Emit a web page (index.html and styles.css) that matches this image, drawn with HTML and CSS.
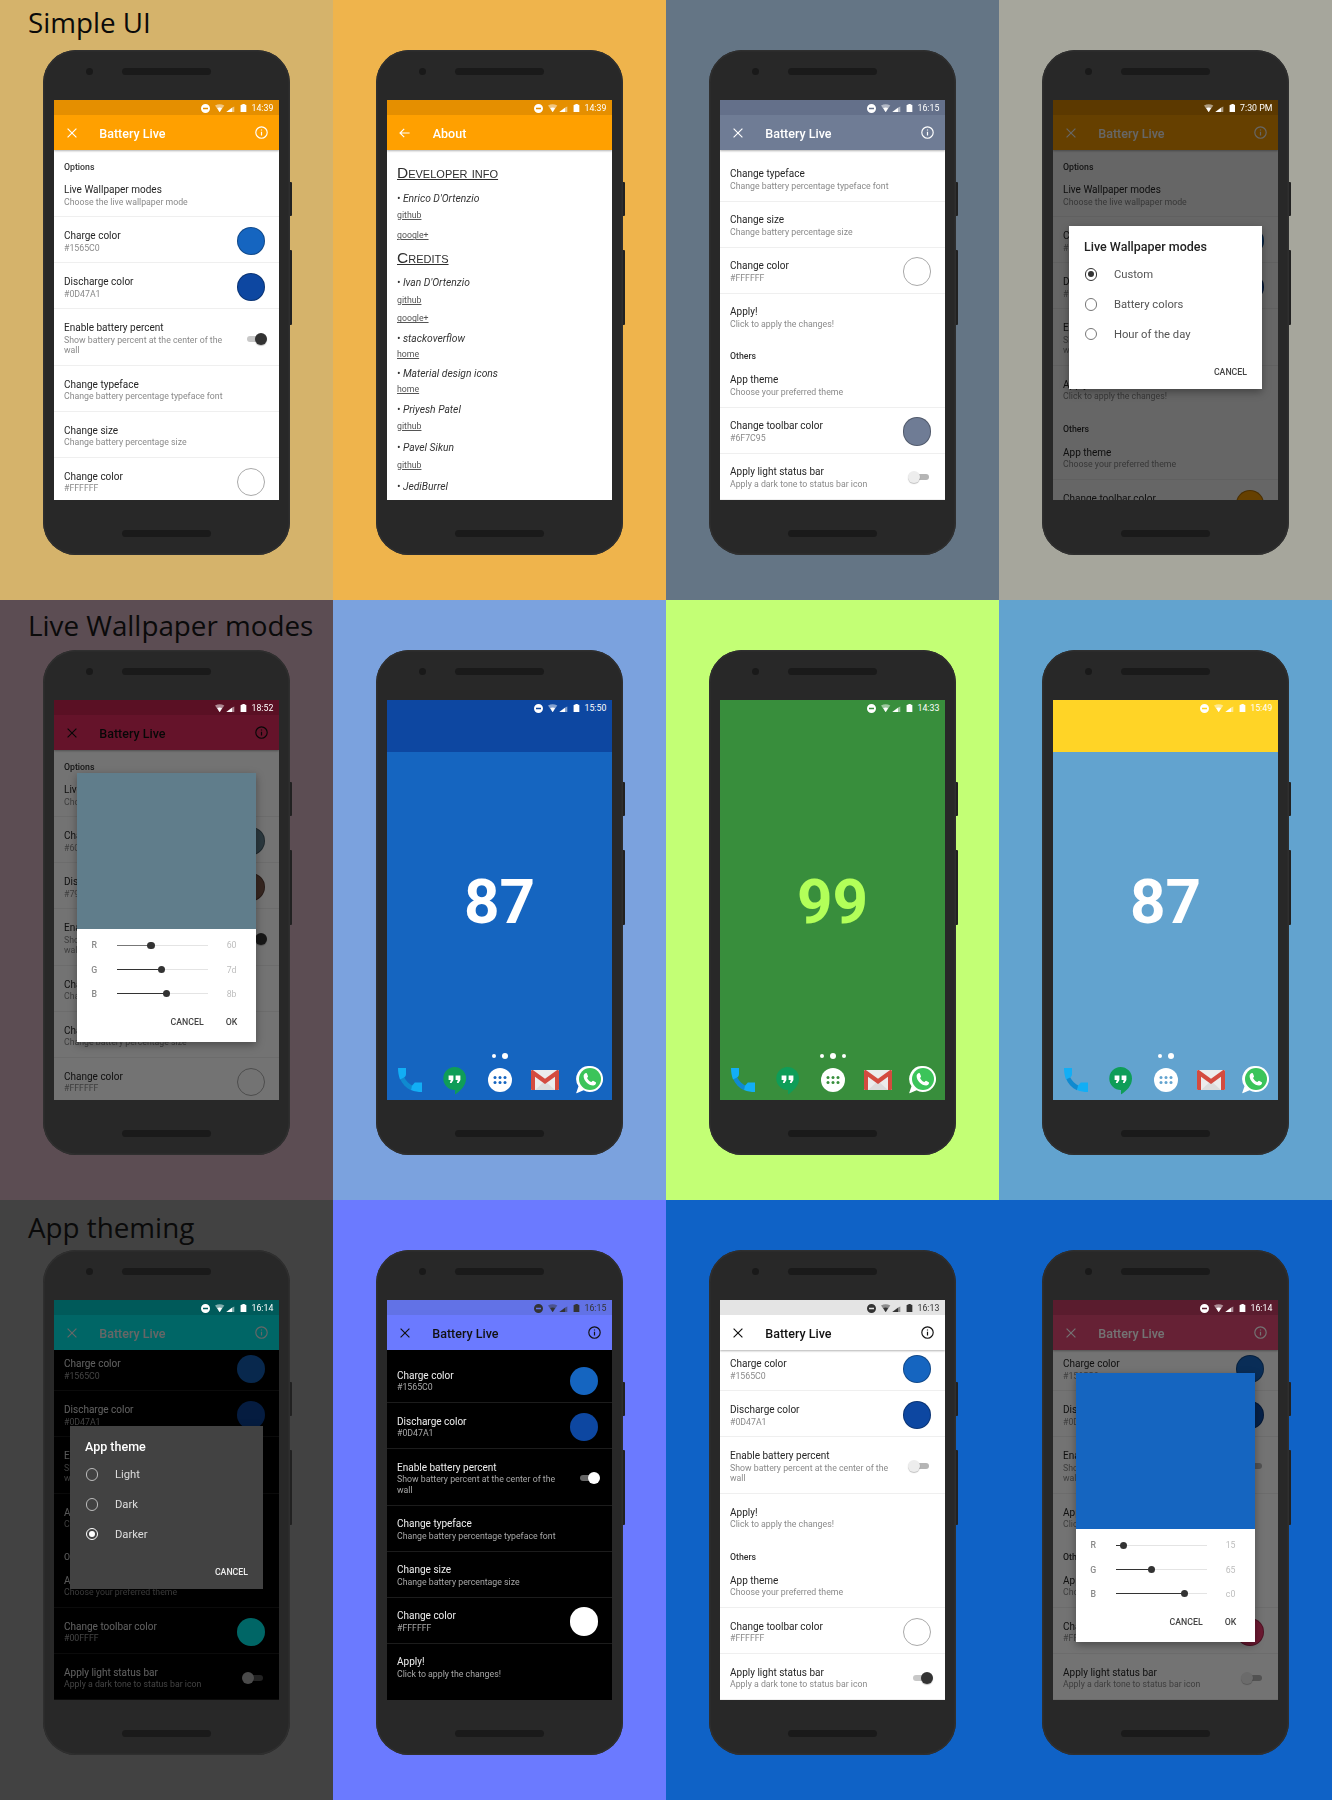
FILE: index.html
```html
<!DOCTYPE html>
<html lang="en">
<head>
<meta charset="utf-8">
<title>Battery Live</title>
<link rel="stylesheet" href="styles.css">
</head>
<body>
<svg class="sprite" aria-hidden="true">
  <symbol id="i-close" viewBox="0 0 10 10"><path d="M.6.6l8.800 8.800M9.400.6L.6 9.400" fill="none" stroke="currentColor" stroke-width="1.150"/></symbol>
  <symbol id="i-back" viewBox="0 0 11 10"><path d="M10.600 5H1M5.200.8L1 5l4.200 4.200" fill="none" stroke="currentColor" stroke-width="1.150"/></symbol>
  <symbol id="i-info" viewBox="0 0 13 13"><circle cx="6.500" cy="6.500" r="5.700" fill="none" stroke="currentColor" stroke-width="1.150"/><path d="M5.900 5.800h1.200v3.800H5.900zM5.900 3.400h1.200v1.200H5.900z" fill="currentColor"/></symbol>
  <symbol id="i-dnd" viewBox="0 0 9 9"><path fill-rule="evenodd" d="M4.500 0a4.500 4.500 0 1 0 0 9a4.500 4.500 0 1 0 0-9zM2 3.800h5v1.400H2z" fill="currentColor"/></symbol>
  <symbol id="i-sys" viewBox="0 0 31.600 8.400">
    <path d="M0 1.400C3-.1 6.300-.1 9.300 1.400L4.650 8.200z" fill="currentColor" opacity=".5"/>
    <path d="M2.200 4C3.700 3.300 5.600 3.300 7.100 4L4.650 8.200z" fill="currentColor"/>
    <path d="M11 8.200L17.200 3.600V8.200z" fill="currentColor"/>
    <path d="M17.200 3.600L19.300 2.400V8.200H17.200z" fill="currentColor" opacity=".5"/>
    <path d="M27.400 0h2.400v.8H31a.6.6 0 0 1 .6.6v6.500a.5.5 0 0 1-.5.5h-5a.5.5 0 0 1-.5-.5V1.400a.6.6 0 0 1 .6-.6h1.200z" fill="currentColor"/>
  </symbol>
  <symbol id="i-phone" viewBox="0 0 24 24">
    <path d="M2 10.500l4-1.500C8 13 11 16 15 18l-2 4.200C8 20 4 16 2 10.500z" fill="#0f8ad0"/>
    <path d="M0 0h8v6c0 1.800-.9 3-2 3.500L2 11.500C.7 8 0 4 0 0z" fill="#12aef5"/>
    <path d="M14 17.800l2.800-3.300H24V24c-4 0-7.500-.6-11-2z" fill="#12aef5"/>
  </symbol>
  <symbol id="i-hangouts" viewBox="0 0 23 27.500">
    <path d="M11.500 0a11.500 11.500 0 0 1 11.500 11.500c0 7-5 12-11 16V23A11.500 11.500 0 0 1 11.500 0z" fill="#0f9d58"/>
    <path d="M5.600 8.500h4.800v4.400L8.600 16H6.800l1-3h-2.200zM12.600 8.500h4.800v4.400L15.600 16h-1.800l1-3h-2.200z" fill="#fff"/>
  </symbol>
  <symbol id="i-apps" viewBox="0 0 24 24">
    <circle cx="12" cy="12" r="12" fill="#fff"/>
    <g fill="currentColor"><circle cx="7" cy="9.500" r="1.500"/><circle cx="12" cy="9.500" r="1.500"/><circle cx="17" cy="9.500" r="1.500"/><circle cx="7" cy="14.500" r="1.500"/><circle cx="12" cy="14.500" r="1.500"/><circle cx="17" cy="14.500" r="1.500"/></g>
  </symbol>
  <symbol id="i-gmail" viewBox="0 0 28 20">
    <rect width="28" height="20" rx="1" fill="#ececec"/>
    <path d="M4 20L14 11l10 9z" fill="#dcdcdc"/>
    <path d="M0 1.500V19a1 1 0 0 0 1 1h3V6.800L14 14l10-7.200V20h3a1 1 0 0 0 1-1V1.500C28 .2 26.800-.3 25.800.3L14 8.800 2.200.3C1.200-.3 0 .2 0 1.500z" fill="#d44b3f"/>
  </symbol>
  <symbol id="i-whatsapp" viewBox="0 0 27 27.500">
    <path d="M14 0a13 13 0 1 1-6.400 24.300L0 27.500l2.500-7.200A13 13 0 0 1 14 0z" fill="#fff"/>
    <circle cx="14" cy="13" r="11" fill="#3bc45a"/>
    <path d="M10.200 7c.9 0 1.300 2.300 1.800 3.200.2.500-.8 1.400-1 1.700 1 1.900 2.400 3.300 4.400 4.200.4-.4 1.200-1.500 1.700-1.300.9.400 3 1.300 3 2 0 1.500-1.500 2.700-3 2.700-4.600 0-9.500-5-9.500-9.500 0-1.500 1.200-3 2.600-3z" fill="#fff"/>
  </symbol>
</svg>

<main class="board">

<!-- Row 1 -->
<section class="cell bg-sand">
  <h2 class="cap cap-r1">Simple UI</h2>
  <div class="phone">
    <div class="phone-top"><span class="camera"></span><span class="speaker"></span></div>
    <div class="btn-power"></div><div class="btn-volume"></div>
    <div class="screen app">
      <div class="status st-orange"><svg class="ic-dnd"><use href="#i-dnd"/></svg><svg class="ic-sys"><use href="#i-sys"/></svg><span class="time">14:39</span></div>
      <div class="toolbar tb-orange"><svg class="ic-close"><use href="#i-close"/></svg><span class="tb-title">Battery Live</span><svg class="ic-info"><use href="#i-info"/></svg></div>
      <div class="list">
        <div class="hdr">Options</div>
        <div class="item"><div class="txt"><div class="t">Live Wallpaper modes</div><div class="s">Choose the live wallpaper mode</div></div></div>
        <div class="item"><div class="txt"><div class="t">Charge color</div><div class="s">#1565C0</div></div><span class="swatch c-blue"></span></div>
        <div class="item"><div class="txt"><div class="t">Discharge color</div><div class="s">#0D47A1</div></div><span class="swatch c-navy"></span></div>
        <div class="item"><div class="txt"><div class="t">Enable battery percent</div><div class="s">Show battery percent at the center of the wall</div></div><span class="switch on"><i class="track"></i><i class="thumb"></i></span></div>
        <div class="item"><div class="txt"><div class="t">Change typeface</div><div class="s">Change battery percentage typeface font</div></div></div>
        <div class="item"><div class="txt"><div class="t">Change size</div><div class="s">Change battery percentage size</div></div></div>
        <div class="item"><div class="txt"><div class="t">Change color</div><div class="s">#FFFFFF</div></div><span class="swatch c-white"></span></div>
      </div>
    </div>
    <div class="phone-bottom"><span class="speaker"></span></div>
  </div>
</section>

<section class="cell bg-amber">
  <div class="cap"></div>
  <div class="phone">
    <div class="phone-top"><span class="camera"></span><span class="speaker"></span></div>
    <div class="btn-power"></div><div class="btn-volume"></div>
    <div class="screen app">
      <div class="status st-orange"><svg class="ic-dnd"><use href="#i-dnd"/></svg><svg class="ic-sys"><use href="#i-sys"/></svg><span class="time">14:39</span></div>
      <div class="toolbar tb-orange"><svg class="ic-back"><use href="#i-back"/></svg><span class="tb-title">About</span></div>
      <div class="about">
        <h3 class="ab-h">Developer info</h3>
        <p class="ab-n ab-after-h">• Enrico D'Ortenzio</p>
        <p class="ab-l"><a>github</a></p>
        <p class="ab-l ab-l-far"><a>google+</a></p>
        <h3 class="ab-h ab-next">Credits</h3>
        <p class="ab-n ab-after-h">• Ivan D'Ortenzio</p>
        <p class="ab-l"><a>github</a></p>
        <p class="ab-l ab-l-mid"><a>google+</a></p>
        <p class="ab-n">• stackoverflow</p>
        <p class="ab-l ab-l-near"><a>home</a></p>
        <p class="ab-n">• Material design icons</p>
        <p class="ab-l ab-l-near"><a>home</a></p>
        <p class="ab-n">• Priyesh Patel</p>
        <p class="ab-l"><a>github</a></p>
        <p class="ab-n ab-n-far">• Pavel Sikun</p>
        <p class="ab-l"><a>github</a></p>
        <p class="ab-n ab-n-far">• JediBurrel</p>
      </div>
    </div>
    <div class="phone-bottom"><span class="speaker"></span></div>
  </div>
</section>

<section class="cell bg-slate">
  <div class="cap"></div>
  <div class="phone">
    <div class="phone-top"><span class="camera"></span><span class="speaker"></span></div>
    <div class="btn-power"></div><div class="btn-volume"></div>
    <div class="screen app">
      <div class="status st-slate"><svg class="ic-dnd"><use href="#i-dnd"/></svg><svg class="ic-sys"><use href="#i-sys"/></svg><span class="time">16:15</span></div>
      <div class="toolbar tb-slate"><svg class="ic-close"><use href="#i-close"/></svg><span class="tb-title">Battery Live</span><svg class="ic-info"><use href="#i-info"/></svg></div>
      <div class="list list-down">
        <div class="item"><div class="txt"><div class="t">Change typeface</div><div class="s">Change battery percentage typeface font</div></div></div>
        <div class="item"><div class="txt"><div class="t">Change size</div><div class="s">Change battery percentage size</div></div></div>
        <div class="item"><div class="txt"><div class="t">Change color</div><div class="s">#FFFFFF</div></div><span class="swatch c-white"></span></div>
        <div class="item flat"><div class="txt"><div class="t">Apply!</div><div class="s">Click to apply the changes!</div></div></div>
        <div class="hdr">Others</div>
        <div class="item"><div class="txt"><div class="t">App theme</div><div class="s">Choose your preferred theme</div></div></div>
        <div class="item"><div class="txt"><div class="t">Change toolbar color</div><div class="s">#6F7C95</div></div><span class="swatch c-slate"></span></div>
        <div class="item"><div class="txt"><div class="t">Apply light status bar</div><div class="s">Apply a dark tone to status bar icon</div></div><span class="switch off"><i class="track"></i><i class="thumb"></i></span></div>
      </div>
    </div>
    <div class="phone-bottom"><span class="speaker"></span></div>
  </div>
</section>

<section class="cell bg-stone">
  <div class="cap"></div>
  <div class="phone">
    <div class="phone-top"><span class="camera"></span><span class="speaker"></span></div>
    <div class="btn-power"></div><div class="btn-volume"></div>
    <div class="screen app">
      <div class="status st-orange-dim"><svg class="ic-sys"><use href="#i-sys"/></svg><span class="time">7:30 PM</span></div>
      <div class="toolbar tb-orange"><svg class="ic-close"><use href="#i-close"/></svg><span class="tb-title">Battery Live</span><svg class="ic-info"><use href="#i-info"/></svg></div>
      <div class="list">
        <div class="hdr">Options</div>
        <div class="item"><div class="txt"><div class="t">Live Wallpaper modes</div><div class="s">Choose the live wallpaper mode</div></div></div>
        <div class="item"><div class="txt"><div class="t">Charge color</div><div class="s">#1565C0</div></div><span class="swatch c-blue"></span></div>
        <div class="item"><div class="txt"><div class="t">Discharge color</div><div class="s">#0D47A1</div></div><span class="swatch c-navy"></span></div>
        <div class="item"><div class="txt"><div class="t">Enable battery percent</div><div class="s">Show battery percent at the center of the wall</div></div><span class="switch off"><i class="track"></i><i class="thumb"></i></span></div>
        <div class="item flat"><div class="txt"><div class="t">Apply!</div><div class="s">Click to apply the changes!</div></div></div>
        <div class="hdr">Others</div>
        <div class="item"><div class="txt"><div class="t">App theme</div><div class="s">Choose your preferred theme</div></div></div>
        <div class="item"><div class="txt"><div class="t">Change toolbar color</div><div class="s">#FFA000</div></div><span class="swatch c-orange"></span></div>
      </div>
      <div class="scrim"></div>
      <div class="radio-dialog">
        <div class="rd-title">Live Wallpaper modes</div>
        <div class="rd-row"><span class="radio checked"></span>Custom</div>
        <div class="rd-row"><span class="radio"></span>Battery colors</div>
        <div class="rd-row"><span class="radio"></span>Hour of the day</div>
        <div class="dlg-actions"><span>CANCEL</span></div>
      </div>
    </div>
    <div class="phone-bottom"><span class="speaker"></span></div>
  </div>
</section>

<!-- Row 2 -->
<section class="cell bg-plum">
  <h2 class="cap cap-r2">Live Wallpaper modes</h2>
  <div class="phone">
    <div class="phone-top"><span class="camera"></span><span class="speaker"></span></div>
    <div class="btn-power"></div><div class="btn-volume"></div>
    <div class="screen app">
      <div class="status st-pink-dim"><svg class="ic-sys"><use href="#i-sys"/></svg><span class="time">18:52</span></div>
      <div class="toolbar tb-pink ink-dark"><svg class="ic-close"><use href="#i-close"/></svg><span class="tb-title">Battery Live</span><svg class="ic-info"><use href="#i-info"/></svg></div>
      <div class="list">
        <div class="hdr">Options</div>
        <div class="item"><div class="txt"><div class="t">Live Wallpaper modes</div><div class="s">Choose the live wallpaper mode</div></div></div>
        <div class="item"><div class="txt"><div class="t">Charge color</div><div class="s">#607D8B</div></div><span class="swatch c-steel"></span></div>
        <div class="item"><div class="txt"><div class="t">Discharge color</div><div class="s">#795548</div></div><span class="swatch c-brown"></span></div>
        <div class="item"><div class="txt"><div class="t">Enable battery percent</div><div class="s">Show battery percent at the center of the wall</div></div><span class="switch on"><i class="track"></i><i class="thumb"></i></span></div>
        <div class="item"><div class="txt"><div class="t">Change typeface</div><div class="s">Change battery percentage typeface font</div></div></div>
        <div class="item"><div class="txt"><div class="t">Change size</div><div class="s">Change battery percentage size</div></div></div>
        <div class="item"><div class="txt"><div class="t">Change color</div><div class="s">#FFFFFF</div></div><span class="swatch c-white"></span></div>
      </div>
      <div class="scrim scrim-soft"></div>
      <div class="picker">
        <div class="pk-color c-steel-flat"></div>
        <div class="pk-rows">
          <div class="pk-row"><span class="pk-l">R</span><span class="slider"><i class="fill fade" style="width:37.600%"></i></span><span class="pk-v">60</span></div>
          <div class="pk-row"><span class="pk-l">G</span><span class="slider"><i class="fill" style="width:49.300%"></i></span><span class="pk-v">7d</span></div>
          <div class="pk-row"><span class="pk-l">B</span><span class="slider"><i class="fill" style="width:54.800%"></i></span><span class="pk-v">8b</span></div>
        </div>
        <div class="dlg-actions pk-actions"><span>CANCEL</span><span>OK</span></div>
      </div>
    </div>
    <div class="phone-bottom"><span class="speaker"></span></div>
  </div>
</section>

<section class="cell bg-sky">
  <div class="cap"></div>
  <div class="phone">
    <div class="phone-top"><span class="camera"></span><span class="speaker"></span></div>
    <div class="btn-power"></div><div class="btn-volume"></div>
    <div class="screen wall wall-blue">
      <div class="status st-navy"><svg class="ic-dnd"><use href="#i-dnd"/></svg><svg class="ic-sys"><use href="#i-sys"/></svg><span class="time">15:50</span></div>
      <div class="band st-navy"></div>
      <div class="percent">87</div>
      <div class="dots"><i class="dot"></i><i class="dot big"></i></div>
      <div class="dock">
        <svg class="d-phone"><use href="#i-phone"/></svg>
        <svg class="d-hang"><use href="#i-hangouts"/></svg>
        <svg class="d-apps"><use href="#i-apps"/></svg>
        <svg class="d-gmail"><use href="#i-gmail"/></svg>
        <svg class="d-wa"><use href="#i-whatsapp"/></svg>
      </div>
    </div>
    <div class="phone-bottom"><span class="speaker"></span></div>
  </div>
</section>

<section class="cell bg-lime">
  <div class="cap"></div>
  <div class="phone">
    <div class="phone-top"><span class="camera"></span><span class="speaker"></span></div>
    <div class="btn-power"></div><div class="btn-volume"></div>
    <div class="screen wall wall-green">
      <div class="status st-green"><svg class="ic-dnd"><use href="#i-dnd"/></svg><svg class="ic-sys"><use href="#i-sys"/></svg><span class="time">14:33</span></div>
      <div class="band st-green"></div>
      <div class="percent pct-lime">99</div>
      <div class="dots"><i class="dot"></i><i class="dot big"></i><i class="dot"></i></div>
      <div class="dock">
        <svg class="d-phone"><use href="#i-phone"/></svg>
        <svg class="d-hang"><use href="#i-hangouts"/></svg>
        <svg class="d-apps"><use href="#i-apps"/></svg>
        <svg class="d-gmail"><use href="#i-gmail"/></svg>
        <svg class="d-wa"><use href="#i-whatsapp"/></svg>
      </div>
    </div>
    <div class="phone-bottom"><span class="speaker"></span></div>
  </div>
</section>

<section class="cell bg-water">
  <div class="cap"></div>
  <div class="phone">
    <div class="phone-top"><span class="camera"></span><span class="speaker"></span></div>
    <div class="btn-power"></div><div class="btn-volume"></div>
    <div class="screen wall wall-water">
      <div class="status st-yellow"><svg class="ic-dnd"><use href="#i-dnd"/></svg><svg class="ic-sys"><use href="#i-sys"/></svg><span class="time">15:49</span></div>
      <div class="band st-yellow"></div>
      <div class="percent">87</div>
      <div class="dots"><i class="dot"></i><i class="dot big"></i></div>
      <div class="dock">
        <svg class="d-phone"><use href="#i-phone"/></svg>
        <svg class="d-hang"><use href="#i-hangouts"/></svg>
        <svg class="d-apps"><use href="#i-apps"/></svg>
        <svg class="d-gmail"><use href="#i-gmail"/></svg>
        <svg class="d-wa"><use href="#i-whatsapp"/></svg>
      </div>
    </div>
    <div class="phone-bottom"><span class="speaker"></span></div>
  </div>
</section>

<!-- Row 3 -->
<section class="cell bg-graphite">
  <h2 class="cap cap-r3">App theming</h2>
  <div class="phone">
    <div class="phone-top"><span class="camera"></span><span class="speaker"></span></div>
    <div class="btn-power"></div><div class="btn-volume"></div>
    <div class="screen app dark">
      <div class="status st-teal-dim"><svg class="ic-dnd"><use href="#i-dnd"/></svg><svg class="ic-sys"><use href="#i-sys"/></svg><span class="time">16:14</span></div>
      <div class="toolbar tb-teal"><svg class="ic-close"><use href="#i-close"/></svg><span class="tb-title">Battery Live</span><svg class="ic-info"><use href="#i-info"/></svg></div>
      <div class="list list-up">
        <div class="item"><div class="txt"><div class="t">Charge color</div><div class="s">#1565C0</div></div><span class="swatch c-blue"></span></div>
        <div class="item"><div class="txt"><div class="t">Discharge color</div><div class="s">#0D47A1</div></div><span class="swatch c-navy"></span></div>
        <div class="item"><div class="txt"><div class="t">Enable battery percent</div><div class="s">Show battery percent at the center of the wall</div></div><span class="switch off"><i class="track"></i><i class="thumb"></i></span></div>
        <div class="item flat"><div class="txt"><div class="t">Apply!</div><div class="s">Click to apply the changes!</div></div></div>
        <div class="hdr">Others</div>
        <div class="item"><div class="txt"><div class="t">App theme</div><div class="s">Choose your preferred theme</div></div></div>
        <div class="item"><div class="txt"><div class="t">Change toolbar color</div><div class="s">#00FFFF</div></div><span class="swatch c-cyan"></span></div>
        <div class="item"><div class="txt"><div class="t">Apply light status bar</div><div class="s">Apply a dark tone to status bar icon</div></div><span class="switch off"><i class="track"></i><i class="thumb"></i></span></div>
      </div>
      <div class="scrim"></div>
      <div class="radio-dialog dialog-dark">
        <div class="rd-title">App theme</div>
        <div class="rd-row"><span class="radio"></span>Light</div>
        <div class="rd-row"><span class="radio"></span>Dark</div>
        <div class="rd-row"><span class="radio checked"></span>Darker</div>
        <div class="dlg-actions"><span>CANCEL</span></div>
      </div>
    </div>
    <div class="phone-bottom"><span class="speaker"></span></div>
  </div>
</section>

<section class="cell bg-periwinkle">
  <div class="cap"></div>
  <div class="phone">
    <div class="phone-top"><span class="camera"></span><span class="speaker"></span></div>
    <div class="btn-power"></div><div class="btn-volume"></div>
    <div class="screen app dark">
      <div class="status st-peri ink-status"><svg class="ic-dnd"><use href="#i-dnd"/></svg><svg class="ic-sys"><use href="#i-sys"/></svg><span class="time">16:15</span></div>
      <div class="toolbar tb-peri ink-dark"><svg class="ic-close"><use href="#i-close"/></svg><span class="tb-title">Battery Live</span><svg class="ic-info"><use href="#i-info"/></svg></div>
      <div class="list list-down-more">
        <div class="item"><div class="txt"><div class="t">Charge color</div><div class="s">#1565C0</div></div><span class="swatch c-blue"></span></div>
        <div class="item"><div class="txt"><div class="t">Discharge color</div><div class="s">#0D47A1</div></div><span class="swatch c-navy"></span></div>
        <div class="item"><div class="txt"><div class="t">Enable battery percent</div><div class="s">Show battery percent at the center of the wall</div></div><span class="switch on"><i class="track"></i><i class="thumb"></i></span></div>
        <div class="item"><div class="txt"><div class="t">Change typeface</div><div class="s">Change battery percentage typeface font</div></div></div>
        <div class="item"><div class="txt"><div class="t">Change size</div><div class="s">Change battery percentage size</div></div></div>
        <div class="item"><div class="txt"><div class="t">Change color</div><div class="s">#FFFFFF</div></div><span class="swatch c-white"></span></div>
        <div class="item flat"><div class="txt"><div class="t">Apply!</div><div class="s">Click to apply the changes!</div></div></div>
      </div>
    </div>
    <div class="phone-bottom"><span class="speaker"></span></div>
  </div>
</section>

<section class="cell bg-royal">
  <div class="cap"></div>
  <div class="phone">
    <div class="phone-top"><span class="camera"></span><span class="speaker"></span></div>
    <div class="btn-power"></div><div class="btn-volume"></div>
    <div class="screen app">
      <div class="status st-light ink-status"><svg class="ic-dnd"><use href="#i-dnd"/></svg><svg class="ic-sys"><use href="#i-sys"/></svg><span class="time">16:13</span></div>
      <div class="toolbar tb-white ink-dark"><svg class="ic-close"><use href="#i-close"/></svg><span class="tb-title">Battery Live</span><svg class="ic-info"><use href="#i-info"/></svg></div>
      <div class="list list-up">
        <div class="item"><div class="txt"><div class="t">Charge color</div><div class="s">#1565C0</div></div><span class="swatch c-blue"></span></div>
        <div class="item"><div class="txt"><div class="t">Discharge color</div><div class="s">#0D47A1</div></div><span class="swatch c-navy"></span></div>
        <div class="item"><div class="txt"><div class="t">Enable battery percent</div><div class="s">Show battery percent at the center of the wall</div></div><span class="switch off"><i class="track"></i><i class="thumb"></i></span></div>
        <div class="item flat"><div class="txt"><div class="t">Apply!</div><div class="s">Click to apply the changes!</div></div></div>
        <div class="hdr">Others</div>
        <div class="item"><div class="txt"><div class="t">App theme</div><div class="s">Choose your preferred theme</div></div></div>
        <div class="item"><div class="txt"><div class="t">Change toolbar color</div><div class="s">#FFFFFF</div></div><span class="swatch c-white"></span></div>
        <div class="item"><div class="txt"><div class="t">Apply light status bar</div><div class="s">Apply a dark tone to status bar icon</div></div><span class="switch on"><i class="track"></i><i class="thumb"></i></span></div>
      </div>
    </div>
    <div class="phone-bottom"><span class="speaker"></span></div>
  </div>
</section>

<section class="cell bg-royal">
  <div class="cap"></div>
  <div class="phone">
    <div class="phone-top"><span class="camera"></span><span class="speaker"></span></div>
    <div class="btn-power"></div><div class="btn-volume"></div>
    <div class="screen app">
      <div class="status st-rose-dim"><svg class="ic-dnd"><use href="#i-dnd"/></svg><svg class="ic-sys"><use href="#i-sys"/></svg><span class="time">16:14</span></div>
      <div class="toolbar tb-rose"><svg class="ic-close"><use href="#i-close"/></svg><span class="tb-title">Battery Live</span><svg class="ic-info"><use href="#i-info"/></svg></div>
      <div class="list list-up">
        <div class="item"><div class="txt"><div class="t">Charge color</div><div class="s">#1565C0</div></div><span class="swatch c-blue"></span></div>
        <div class="item"><div class="txt"><div class="t">Discharge color</div><div class="s">#0D47A1</div></div><span class="swatch c-navy"></span></div>
        <div class="item"><div class="txt"><div class="t">Enable battery percent</div><div class="s">Show battery percent at the center of the wall</div></div><span class="switch off"><i class="track"></i><i class="thumb"></i></span></div>
        <div class="item flat"><div class="txt"><div class="t">Apply!</div><div class="s">Click to apply the changes!</div></div></div>
        <div class="hdr">Others</div>
        <div class="item"><div class="txt"><div class="t">App theme</div><div class="s">Choose your preferred theme</div></div></div>
        <div class="item"><div class="txt"><div class="t">Change toolbar color</div><div class="s">#FF4A76</div></div><span class="swatch c-rose"></span></div>
        <div class="item"><div class="txt"><div class="t">Apply light status bar</div><div class="s">Apply a dark tone to status bar icon</div></div><span class="switch off"><i class="track"></i><i class="thumb"></i></span></div>
      </div>
      <div class="scrim scrim-soft"></div>
      <div class="picker">
        <div class="pk-color c-blue-flat"></div>
        <div class="pk-rows">
          <div class="pk-row"><span class="pk-l">R</span><span class="slider"><i class="fill" style="width:8%"></i></span><span class="pk-v">15</span></div>
          <div class="pk-row"><span class="pk-l">G</span><span class="slider"><i class="fill" style="width:39.700%"></i></span><span class="pk-v">65</span></div>
          <div class="pk-row"><span class="pk-l">B</span><span class="slider"><i class="fill" style="width:75.300%"></i></span><span class="pk-v">c0</span></div>
        </div>
        <div class="dlg-actions pk-actions"><span>CANCEL</span><span>OK</span></div>
      </div>
    </div>
    <div class="phone-bottom"><span class="speaker"></span></div>
  </div>
</section>

</main>
</body>
</html>
```

FILE: styles.css
```css
* { box-sizing: border-box; }
html, body { margin: 0; padding: 0; }
body { font-family: Roboto, "Liberation Sans", sans-serif; background: #222; }
.sprite { position: absolute; width: 0; height: 0; overflow: hidden; }

.board { display: grid; grid-template-columns: repeat(4, 333px); grid-template-rows: repeat(3, 600px); width: 1332px; height: 1800px; }
.cell { overflow: hidden; }

.bg-sand { background: #d5b36b; }
.bg-amber { background: #efb44c; }
.bg-slate { background: #647585; }
.bg-stone { background: #a6a69c; }
.bg-plum { background: #5c4d53; }
.bg-sky { background: #7ba2de; }
.bg-lime { background: #c3ff75; }
.bg-water { background: #62a3cf; }
.bg-graphite { background: #424242; }
.bg-periwinkle { background: #6b7aff; }
.bg-royal { background: #0f62c6; }

.cap { height: 50px; margin: 0; padding-left: 28px; font: 400 27.800px/30px "Open Sans", "Noto Sans", sans-serif; color: #0a0a0a; white-space: nowrap; }
.cap-r1 { padding-top: 7px; }
.cap-r2 { padding-top: 10px; }
.cap-r3 { padding-top: 12px; }

/* device */
.phone { position: relative; width: 247px; height: 504.500px; margin-left: 43px; padding: 0 11px; background: #282828; border-radius: 33px; box-shadow: inset 0 0 0 1.500px #2f2f2f; }
.phone-top { display: flex; align-items: center; height: 50px; padding: 18px 0 25px 32px; gap: 29px; }
.camera { width: 7px; height: 7px; border-radius: 50%; background: #191919; }
.speaker { display: block; width: 89px; height: 7px; border-radius: 4px; background: #1a1a1a; }
.phone-bottom { display: flex; justify-content: center; padding-top: 30px; }
.btn-power, .btn-volume { position: absolute; right: -2px; width: 2px; background: #212121; border-radius: 0 1px 1px 0; }
.btn-power { top: 132px; height: 34px; }
.btn-volume { top: 200px; height: 75px; }

/* screens */
.screen { position: relative; width: 225px; height: 400px; overflow: hidden; display: flex; flex-direction: column; background: #fff; }
.app { filter: blur(.35px); }
.app.dark { background: #000; }

.status { position: relative; z-index: 3; flex: none; height: 15px; display: flex; align-items: center; justify-content: flex-end; padding: 1px 5.700px 0 0; color: #fff; }
.ic-dnd { width: 9px; height: 9px; margin-right: 4.900px; }
.ic-sys { width: 31.600px; height: 8.400px; margin-right: 4.700px; }
.time { font-size: 8.750px; line-height: 14px; }
.ink-status { color: #333; }

.st-orange { background: #e58f00; }
.st-orange-dim { background: #5c3900; }
.st-slate { background: #64708a; }
.st-pink-dim { background: #5a1024; }
.st-teal-dim { background: #005a5a; }
.st-peri { background: #6272e6; }
.st-light { background: #e4e4e4; }
.st-rose-dim { background: #5a1c2e; }
.st-navy { background: #0d47a1; }
.st-green { background: #388e3c; }
.st-yellow { background: #ffd426; }

.toolbar { position: relative; z-index: 1; flex: none; height: 35px; display: flex; align-items: center; padding: 0 11.200px 0 12.700px; color: #fff; box-shadow: 0 1px 2px rgba(0,0,0,.3); }
.ink-dark { color: #111; }
.tb-orange { background: #ffa000; }
.tb-slate { background: #6f7c95; }
.tb-pink { background: #e02c5d; }
.tb-teal { background: #00ffff; box-shadow: none; }
.tb-peri { background: #6b7aff; box-shadow: none; }
.tb-white { background: #fff; }
.tb-rose { background: #e24a76; }
.ic-close { flex: none; width: 10px; height: 10px; }
.ic-back { flex: none; width: 11px; height: 10px; margin-left: -.500px; }
.ic-info { flex: none; width: 13px; height: 13px; margin-left: auto; }
.tb-title { margin: 1px 0 0 22.600px; font-size: 12.500px; font-weight: 500; line-height: 15px; }

/* lists */
.list { flex: 1; min-height: 0; }
.list-down { padding-top: 5.800px; }
.list-down-more { padding-top: 7.200px; }
.list-up { margin-top: -4.600px; }
.hdr { height: 22px; padding: 10.500px 0 0 10px; font-size: 8.750px; font-weight: 500; line-height: 12px; color: #333; }
.hdr:first-child { height: 21.500px; }
.item { display: flex; align-items: center; padding: 11.500px 14px 9.100px 10px; border-bottom: 1px solid #efefef; }
.item.flat { border-bottom-color: transparent; }
.txt { flex: 1; min-width: 0; max-width: 168px; }
.t { font-size: 10px; line-height: 13px; color: #262626; white-space: nowrap; }
.s { margin-top: .7px; font-size: 8.750px; line-height: 10.700px; color: #8a8a8a; }
.dark .item { border-bottom-color: #1c1c1c; }
.dark .item.flat { border-bottom-color: transparent; }
.dark .t { color: #eee; }
.dark .s { color: #a8a8a8; }
.dark .hdr { color: #ddd; }

.swatch { flex: none; width: 28.300px; height: 28.300px; margin: -2.500px 0 -2.500px auto; border-radius: 50%; border: 1px solid rgba(0,0,0,.28); }
.dark .swatch { border-color: transparent; }
.c-blue { background: #1565c0; }
.c-navy { background: #0d47a1; }
.c-white { background: #fff; border-color: #aaa; }
.c-slate { background: #6f7c95; }
.c-orange { background: #ffa000; }
.c-steel { background: #607d8b; }
.c-brown { background: #795548; }
.c-cyan { background: #00ffff; }
.c-rose { background: #f0386e; }
.c-steel-flat { background: #607d8b; }
.c-blue-flat { background: #1565c0; }

.switch { position: relative; flex: none; width: 25px; height: 12px; margin: 0 -1.700px 0 auto; display: flex; align-items: center; }
.track { display: block; width: 16px; height: 6px; margin-left: 5px; border-radius: 3px; background: #c8c8c8; }
.thumb { position: absolute; top: 0; width: 12px; height: 12px; border-radius: 50%; background: #333; box-shadow: 0 1px 1px rgba(0,0,0,.25); }
.switch.on .thumb { right: 0; }
.switch.off .thumb { left: 0; background: #ededed; }
.switch.off .track { background: #b5b5b5; }
.dark .switch.on .thumb { background: #fff; }
.dark .switch.on .track { background: #666; }
.dark .switch.off .thumb { background: #bbb; }
.dark .switch.off .track { background: #555; }

/* about page */
.about { padding: 14.400px 10px 0; color: #333; }
.about p, .about h3 { margin: 0; }
.ab-h { font: 400 15.500px/18px "Liberation Sans", sans-serif; font-variant: small-caps; text-decoration: underline; color: #2e2e2e; }
.about .ab-next { margin-top: 8px; }
.about .ab-n { margin-top: 8.800px; font-size: 10.300px; line-height: 12px; font-style: italic; color: #333; }
.about .ab-after-h { margin-top: 10.200px; }
.about .ab-n-far { margin-top: 10.600px; }
.about .ab-l { margin-top: 4.100px; font-size: 8.750px; line-height: 12px; color: #555; }
.ab-l a { text-decoration: underline; }
.about .ab-l-far { margin-top: 8.600px; }
.about .ab-l-mid { margin-top: 6.800px; }
.about .ab-l-near { margin-top: 2.500px; }

/* dialogs */
.scrim { position: absolute; left: 0; right: 0; top: 15px; bottom: 0; z-index: 2; background: rgba(0,0,0,.6); }
.scrim-soft { background: rgba(0,0,0,.55); }

.radio-dialog { position: absolute; z-index: 4; left: 15.700px; top: 125.800px; width: 193.600px; height: 163.400px; padding: 13.700px 15.300px 0; background: #fff; color: #555; box-shadow: 0 3px 8px rgba(0,0,0,.35); }
.rd-title { height: 15px; margin-bottom: 5px; font-size: 12.500px; font-weight: 500; line-height: 15px; color: #222; }
.rd-row { display: flex; align-items: center; height: 29.900px; font-size: 11.250px; }
.radio { position: relative; flex: none; width: 12.400px; height: 12.400px; margin: 0 16.500px 0 1px; border: 1.200px solid #777; border-radius: 50%; }
.radio.checked { border-color: #333; }
.radio.checked::after { content: ""; position: absolute; left: 2px; top: 2px; width: 6px; height: 6px; border-radius: 50%; background: #333; }
.dlg-actions { display: flex; justify-content: flex-end; margin-top: 16.600px; font-size: 8.750px; font-weight: 500; line-height: 12px; color: #444; gap: 22px; }
.dialog-dark { background: #424242; color: #ddd; }
.dialog-dark .rd-title { color: #fff; }
.dialog-dark .radio { border-color: #bbb; }
.dialog-dark .radio.checked { border-color: #fff; }
.dialog-dark .radio.checked::after { background: #fff; }
.dialog-dark .dlg-actions { color: #eee; }

.picker { position: absolute; z-index: 4; left: 22.700px; top: 72.600px; width: 179.600px; height: 269.400px; background: #fff; box-shadow: 0 3px 8px rgba(0,0,0,.35); }
.pk-color { height: 156.500px; }
.pk-rows { padding-top: 4px; }
.pk-row { display: flex; align-items: center; height: 24.300px; padding-left: 12px; font-size: 8.750px; }
.pk-l { width: 11.200px; text-align: center; font-weight: 500; color: #8a8a8a; }
.slider { display: block; width: 90.700px; height: 1px; margin-left: 17px; background: #e4e4e4; }
.fill { position: relative; display: block; height: 1px; background: #333; }
.fill.fade { background: #777; }
.fill::after { content: ""; position: absolute; right: -3.600px; top: -3.100px; width: 7.200px; height: 7.200px; border-radius: 50%; background: #333; }
.pk-v { width: 14px; margin-left: 17px; text-align: center; color: #bdbdbd; }
.pk-actions { margin-top: 10.500px; padding-right: 19px; }

/* live wallpaper */
.wall-blue { background: #1565c0; color: #1565c0; }
.wall-green { background: #388e3c; color: #388e3c; }
.wall-water { background: #62a3cf; color: #62a3cf; }
.band { flex: none; height: 37px; }
.percent { position: absolute; left: 0; right: 0; top: 0; bottom: 0; display: flex; align-items: center; justify-content: center; padding-top: 2px; font-size: 62px; font-weight: 700; color: #fff; }
.pct-lime { color: #b2ff59; }
.dots { flex: none; display: flex; align-items: center; justify-content: center; gap: 6px; height: 8px; margin-top: auto; position: relative; }
.dot { display: block; width: 4px; height: 4px; border-radius: 50%; background: #fff; }
.dot.big { width: 6px; height: 6px; }
.dock { position: relative; flex: none; height: 40px; display: grid; grid-template-columns: repeat(5, 45px); justify-items: center; align-items: center; }
.d-phone { width: 24px; height: 24px; }
.d-hang { width: 23px; height: 27.500px; margin-top: 2px; }
.d-apps { width: 24px; height: 24px; }
.d-gmail { width: 28px; height: 20px; }
.d-wa { width: 27px; height: 27.500px; }
```
